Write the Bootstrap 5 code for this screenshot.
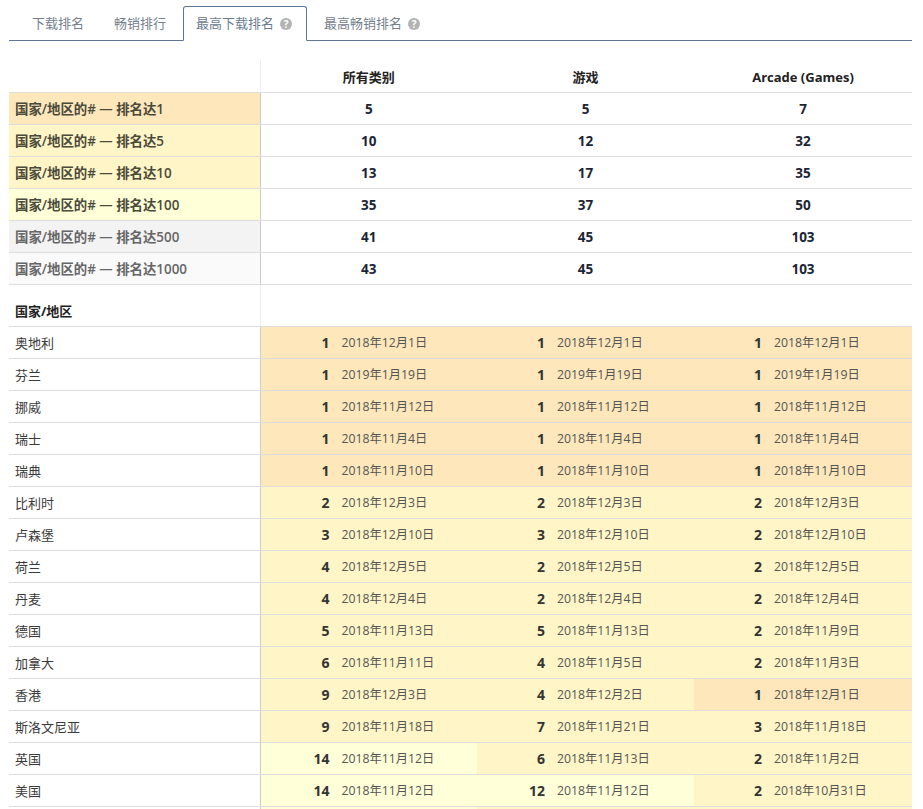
<!DOCTYPE html>
<html lang="zh">
<head>
<meta charset="utf-8">
<title>排名</title>
<link href="https://cdn.jsdelivr.net/npm/bootstrap@5.3.0/dist/css/bootstrap.min.css" rel="stylesheet">
<style>
html,body{overflow:hidden;height:809px}
body{font-family:"Open Sans","Noto Sans CJK SC",sans-serif;font-size:13px;color:#333;background:#fff;padding:6px 11px 0 9px}
.rank-tabs{border-bottom:1px solid #5f7696;padding-left:10px;gap:4px;flex-wrap:nowrap;height:35px}
.rank-tabs .nav-link{font-size:13px;line-height:18px;color:#74808d;padding:7px 12px 9px;border:1px solid transparent;border-radius:3px 3px 0 0;margin:0;height:35px}
.rank-tabs .nav-link.active{color:#6b7c90;border-color:#5f7696 #5f7696 #fff;background:#fff;height:35px}
.help-dot{display:inline-block;width:12px;height:12px;border-radius:50%;background:#b3b3b3;color:#fff;font-size:10px;line-height:12px;font-weight:700;text-align:center;margin:0 2px 0 6px;vertical-align:0}
.rank-table{table-layout:fixed;width:903px;margin:19px 0 0;border-collapse:collapse;color:#333;font-size:13px}
.rank-table td,.rank-table th{height:32px;padding:2px 0 0;border:0;border-bottom:1px solid #ddd;vertical-align:middle;background:transparent;box-shadow:none;line-height:18px}
.rank-table td.lbl{padding-left:6px;border-right:1px solid #ccc;font-weight:400;color:#3a3a3a}
.rank-table td.sum{text-align:center;font-weight:700;font-size:13.5px;color:#1c2536}
.rank-table .headrow th{color:#222;font-weight:700;text-align:center}
.rank-table th.blank{border-right:1px solid #eee}
.rank-table tr.sechead th{height:42px;vertical-align:bottom;padding:0 0 6px;text-align:left}
.rank-table tr.sechead th.lblh{padding-left:6px;color:#222;border-right:1px solid #eee}
.rank-table th.tier{padding-left:6px;text-align:left;font-weight:600;font-size:13.4px;border-right:1px solid #ccc;color:#4a4a3a}
.rank-table td.t1,.rank-table th.t1{background:#fde7bb}
.rank-table td.t5,.rank-table th.t5{background:#fff5c6}
.rank-table td.t100,.rank-table th.t100{background:#ffffd8}
.rank-table th.t500{background:#f3f3f3;color:#666}
.rank-table th.t1000{background:#fafafa;color:#666}
.pos{display:inline-block;width:68px;text-align:right;font-size:14px;font-weight:700;color:#333}
.rank-table td:nth-child(2) .pos{width:69px}
.when{margin-left:12px;font-size:12.25px;color:#555;vertical-align:1px}
</style>
</head>
<body>
<ul class="nav nav-tabs rank-tabs">
<li class="nav-item"><a class="nav-link" href="#">下载排名</a></li>
<li class="nav-item"><a class="nav-link" href="#">畅销排行</a></li>
<li class="nav-item"><a class="nav-link active" href="#">最高下载排名<span class="help-dot">?</span></a></li>
<li class="nav-item"><a class="nav-link" href="#">最高畅销排名<span class="help-dot">?</span></a></li>
</ul>
<table class="table rank-table">
<colgroup><col style="width:251px"><col style="width:217px"><col style="width:217px"><col style="width:218px"></colgroup>
<thead>
<tr class="headrow"><th class="blank"></th><th>所有类别</th><th>游戏</th><th>Arcade (Games)</th></tr>
</thead>
<tbody>
<tr><th class="tier t1">国家/地区的# — 排名达1</th><td class="sum">5</td><td class="sum">5</td><td class="sum">7</td></tr>
<tr><th class="tier t5">国家/地区的# — 排名达5</th><td class="sum">10</td><td class="sum">12</td><td class="sum">32</td></tr>
<tr><th class="tier t5">国家/地区的# — 排名达10</th><td class="sum">13</td><td class="sum">17</td><td class="sum">35</td></tr>
<tr><th class="tier t100">国家/地区的# — 排名达100</th><td class="sum">35</td><td class="sum">37</td><td class="sum">50</td></tr>
<tr><th class="tier t500">国家/地区的# — 排名达500</th><td class="sum">41</td><td class="sum">45</td><td class="sum">103</td></tr>
<tr><th class="tier t1000">国家/地区的# — 排名达1000</th><td class="sum">43</td><td class="sum">45</td><td class="sum">103</td></tr>
<tr class="sechead"><th class="lblh">国家/地区</th><th></th><th></th><th></th></tr>
<tr><td class="lbl">奥地利</td><td class="t1"><span class="pos">1</span><span class="when">2018年12月1日</span></td><td class="t1"><span class="pos">1</span><span class="when">2018年12月1日</span></td><td class="t1"><span class="pos">1</span><span class="when">2018年12月1日</span></td></tr>
<tr><td class="lbl">芬兰</td><td class="t1"><span class="pos">1</span><span class="when">2019年1月19日</span></td><td class="t1"><span class="pos">1</span><span class="when">2019年1月19日</span></td><td class="t1"><span class="pos">1</span><span class="when">2019年1月19日</span></td></tr>
<tr><td class="lbl">挪威</td><td class="t1"><span class="pos">1</span><span class="when">2018年11月12日</span></td><td class="t1"><span class="pos">1</span><span class="when">2018年11月12日</span></td><td class="t1"><span class="pos">1</span><span class="when">2018年11月12日</span></td></tr>
<tr><td class="lbl">瑞士</td><td class="t1"><span class="pos">1</span><span class="when">2018年11月4日</span></td><td class="t1"><span class="pos">1</span><span class="when">2018年11月4日</span></td><td class="t1"><span class="pos">1</span><span class="when">2018年11月4日</span></td></tr>
<tr><td class="lbl">瑞典</td><td class="t1"><span class="pos">1</span><span class="when">2018年11月10日</span></td><td class="t1"><span class="pos">1</span><span class="when">2018年11月10日</span></td><td class="t1"><span class="pos">1</span><span class="when">2018年11月10日</span></td></tr>
<tr><td class="lbl">比利时</td><td class="t5"><span class="pos">2</span><span class="when">2018年12月3日</span></td><td class="t5"><span class="pos">2</span><span class="when">2018年12月3日</span></td><td class="t5"><span class="pos">2</span><span class="when">2018年12月3日</span></td></tr>
<tr><td class="lbl">卢森堡</td><td class="t5"><span class="pos">3</span><span class="when">2018年12月10日</span></td><td class="t5"><span class="pos">3</span><span class="when">2018年12月10日</span></td><td class="t5"><span class="pos">2</span><span class="when">2018年12月10日</span></td></tr>
<tr><td class="lbl">荷兰</td><td class="t5"><span class="pos">4</span><span class="when">2018年12月5日</span></td><td class="t5"><span class="pos">2</span><span class="when">2018年12月5日</span></td><td class="t5"><span class="pos">2</span><span class="when">2018年12月5日</span></td></tr>
<tr><td class="lbl">丹麦</td><td class="t5"><span class="pos">4</span><span class="when">2018年12月4日</span></td><td class="t5"><span class="pos">2</span><span class="when">2018年12月4日</span></td><td class="t5"><span class="pos">2</span><span class="when">2018年12月4日</span></td></tr>
<tr><td class="lbl">德国</td><td class="t5"><span class="pos">5</span><span class="when">2018年11月13日</span></td><td class="t5"><span class="pos">5</span><span class="when">2018年11月13日</span></td><td class="t5"><span class="pos">2</span><span class="when">2018年11月9日</span></td></tr>
<tr><td class="lbl">加拿大</td><td class="t5"><span class="pos">6</span><span class="when">2018年11月11日</span></td><td class="t5"><span class="pos">4</span><span class="when">2018年11月5日</span></td><td class="t5"><span class="pos">2</span><span class="when">2018年11月3日</span></td></tr>
<tr><td class="lbl">香港</td><td class="t5"><span class="pos">9</span><span class="when">2018年12月3日</span></td><td class="t5"><span class="pos">4</span><span class="when">2018年12月2日</span></td><td class="t1"><span class="pos">1</span><span class="when">2018年12月1日</span></td></tr>
<tr><td class="lbl">斯洛文尼亚</td><td class="t5"><span class="pos">9</span><span class="when">2018年11月18日</span></td><td class="t5"><span class="pos">7</span><span class="when">2018年11月21日</span></td><td class="t5"><span class="pos">3</span><span class="when">2018年11月18日</span></td></tr>
<tr><td class="lbl">英国</td><td class="t100"><span class="pos">14</span><span class="when">2018年11月12日</span></td><td class="t5"><span class="pos">6</span><span class="when">2018年11月13日</span></td><td class="t5"><span class="pos">2</span><span class="when">2018年11月2日</span></td></tr>
<tr><td class="lbl">美国</td><td class="t100"><span class="pos">14</span><span class="when">2018年11月12日</span></td><td class="t100"><span class="pos">12</span><span class="when">2018年11月12日</span></td><td class="t5"><span class="pos">2</span><span class="when">2018年10月31日</span></td></tr>
<tr><td class="lbl"></td><td class="t100"></td><td class="t5"></td><td class="t5"></td></tr>
</tbody>
</table>
<script src="https://cdn.jsdelivr.net/npm/bootstrap@5.3.0/dist/js/bootstrap.bundle.min.js"></script>
</body>
</html>
